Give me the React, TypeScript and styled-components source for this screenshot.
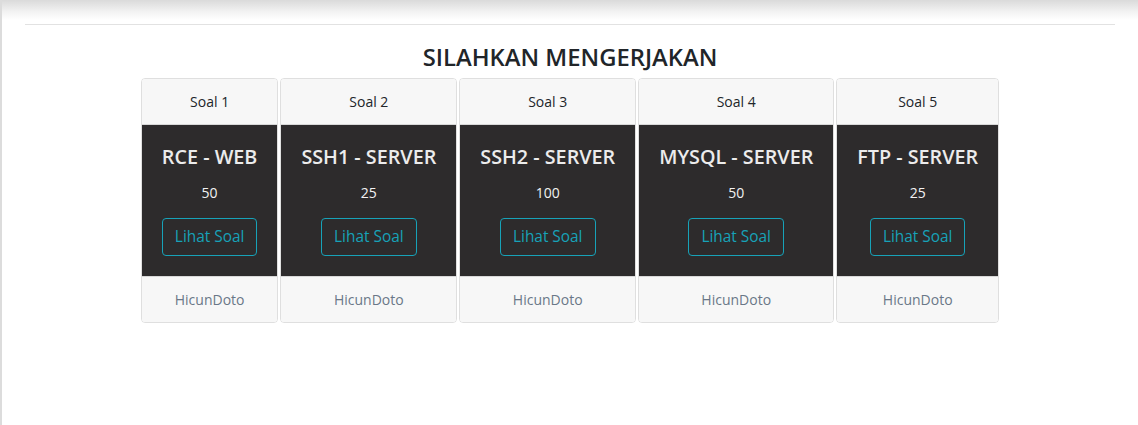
import React from "react";
import styled, { createGlobalStyle } from "styled-components";

const GlobalStyle = createGlobalStyle`
  html, body { margin: 0; padding: 0; background: #fff; }
  body {
    font-family: "Open Sans", "Noto Sans", Arial, sans-serif;
    font-size: 14px;
    line-height: 1.5;
    color: #212529;
  }
  * { box-sizing: border-box; }
`;

const Page = styled.div`
  min-height: 425px;
  border-left: 2px solid #dcdcdc;
`;

const TopShade = styled.div`
  height: 20px;
  background: linear-gradient(to bottom, #dadada 0%, #f3f3f3 60%, #ffffff 100%);
`;

const Container = styled.div`
  padding: 0 23px;
`;

const Rule = styled.hr`
  margin: 4px 0 0;
  border: 0;
  border-top: 1px solid #e2e2e2;
`;

const Heading = styled.h4`
  margin: 18px 0 6px;
  text-align: center;
  font-size: 23.8px;
  line-height: 29px;
  font-weight: 600;
  color: #212529;
`;

const CardRow = styled.div`
  display: flex;
  justify-content: center;
  align-items: stretch;
  gap: 2px;
`;

const Card = styled.div`
  display: flex;
  flex-direction: column;
  border: 1px solid rgba(0, 0, 0, 0.125);
  border-radius: 4px;
  overflow: hidden;
  text-align: center;
`;

const CardHeader = styled.div`
  padding: 12px 20px;
  background: #f7f7f7;
  border-bottom: 1px solid rgba(0, 0, 0, 0.125);
  font-size: 14px;
  line-height: 21px;
  color: #212529;
`;

const CardBody = styled.div`
  background: #2d2b2c;
  padding: 20px;
`;

const CardTitle = styled.h5`
  margin: 0 0 13px;
  font-size: 19.75px;
  line-height: 24px;
  font-weight: 600;
  color: #ececec;
  white-space: nowrap;
`;

const Points = styled.p`
  margin: 0 0 15px;
  font-size: 14px;
  line-height: 21px;
  color: #f2f2f2;
`;

const OutlineButton = styled.a`
  display: inline-block;
  padding: 6px 12px;
  font-size: 15.4px;
  line-height: 24px;
  color: #17a2b8;
  border: 1px solid #17a2b8;
  border-radius: 4px;
  text-decoration: none;
  background: transparent;
  cursor: pointer;
`;

const CardFooter = styled.div`
  padding: 12px 20px;
  background: #f7f7f7;
  border-top: 1px solid rgba(0, 0, 0, 0.125);
  font-size: 14px;
  line-height: 21px;
  color: #6a7788;
`;

const soal = [
  { no: 1, title: "RCE - WEB", points: 50 },
  { no: 2, title: "SSH1 - SERVER", points: 25 },
  { no: 3, title: "SSH2 - SERVER", points: 100 },
  { no: 4, title: "MYSQL - SERVER", points: 50 },
  { no: 5, title: "FTP - SERVER", points: 25 },
];

export default function App() {
  return (
    <>
      <GlobalStyle />
      <Page>
        <TopShade />
        <Container>
          <Rule />
          <Heading>SILAHKAN MENGERJAKAN</Heading>
          <CardRow>
            {soal.map((s) => (
              <Card key={s.no}>
                <CardHeader>Soal {s.no}</CardHeader>
                <CardBody>
                  <CardTitle>{s.title}</CardTitle>
                  <Points>{s.points}</Points>
                  <OutlineButton>Lihat Soal</OutlineButton>
                </CardBody>
                <CardFooter>HicunDoto</CardFooter>
              </Card>
            ))}
          </CardRow>
        </Container>
      </Page>
    </>
  );
}
